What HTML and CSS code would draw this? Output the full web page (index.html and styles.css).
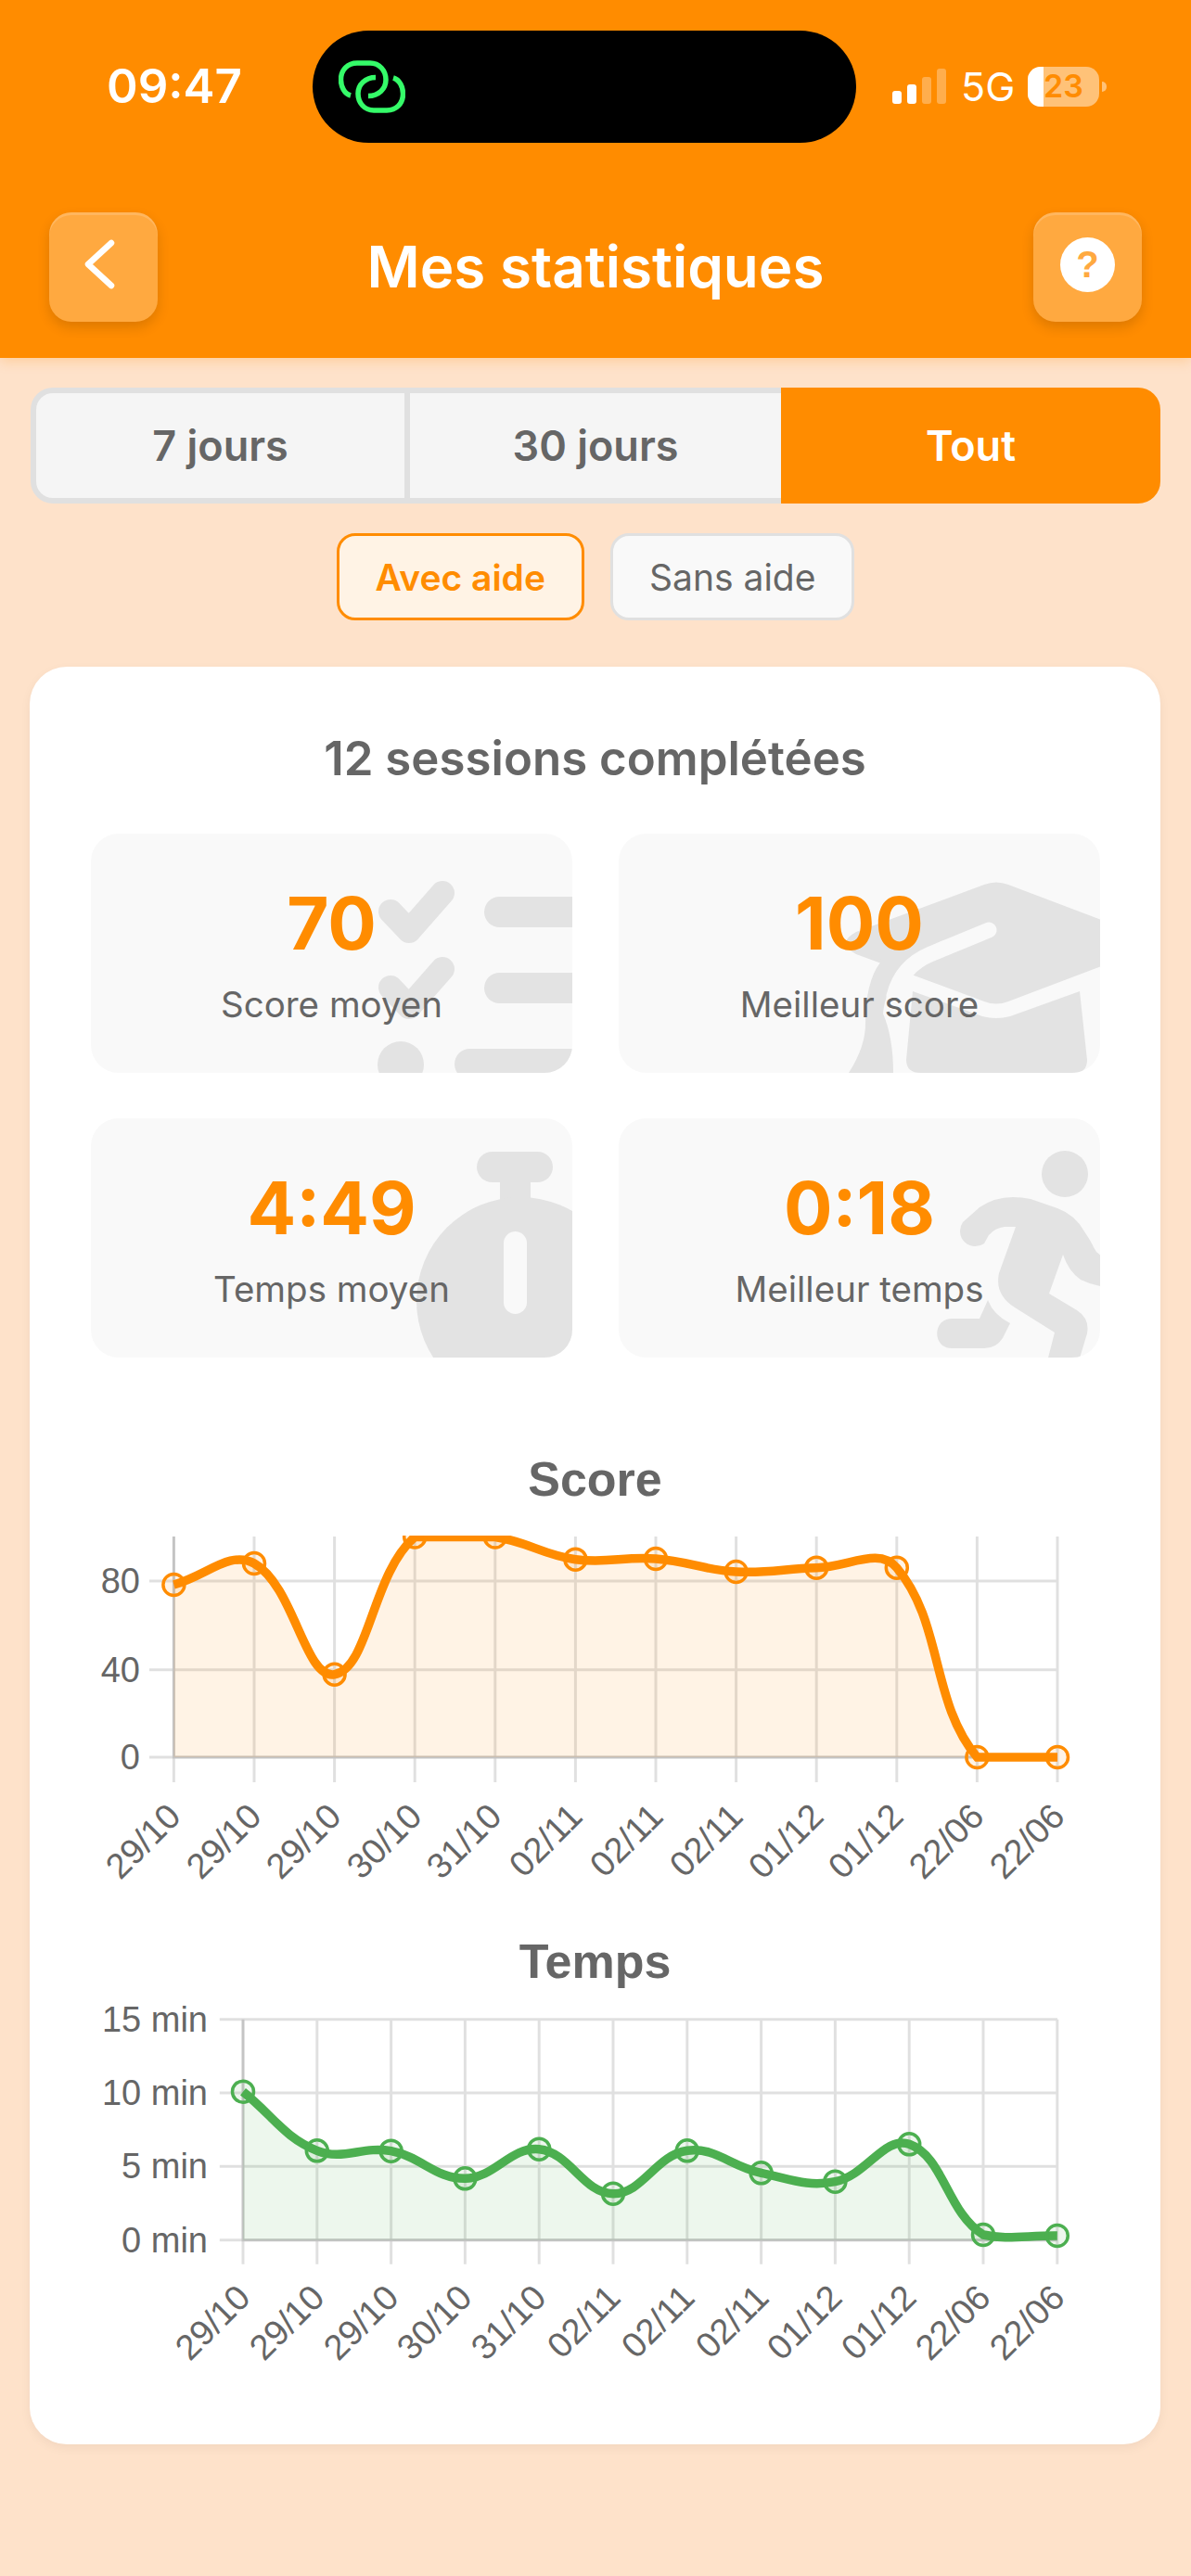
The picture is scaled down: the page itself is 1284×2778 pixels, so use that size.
FILE: index.html
```html
<!DOCTYPE html>
<html lang="fr">
<head>
<meta charset="utf-8">
<title>Mes statistiques</title>
<link rel="stylesheet" href="styles.css">
</head>
<body>
<header class="header">
  <div class="status">
    <span class="time">09:47</span>
    <div class="island">
      <svg class="chain" viewBox="0 0 72 57" width="72" height="57"><path d="M13 38C6 36 2.5 28 2.5 21C2.5 10 10 3 20 3H34C44 3 51 11 51 21C51 31 43 38.5 32 38.5"/><path d="M59 19C66 21 69.5 29 69.5 36C69.5 47 62 54 52 54H38C28 54 21 46 21 36C21 26 29 18.5 40 18.5"/></svg>
    </div>
    <div class="signal">
      <i class="bar b1"></i><i class="bar b2"></i><i class="bar b3 dim"></i><i class="bar b4 dim"></i>
    </div>
    <span class="net">5G</span>
    <div class="battery"><i class="battery-fill"></i><span class="battery-text">23</span></div>
    <i class="battery-tip"></i>
  </div>
  <nav class="nav">
    <button class="nav-btn"><svg class="chevron" viewBox="0 0 40 56" width="40" height="56"><polyline points="32,5 7,28 32,51"/></svg></button>
    <h1 class="nav-title">Mes statistiques</h1>
    <button class="nav-btn"><span class="help-dot">?</span></button>
  </nav>
</header>

<div class="tabs">
  <div class="tab tab-first">7 jours</div>
  <div class="tab tab-mid">30 jours</div>
  <div class="tab tab-on">Tout</div>
</div>

<div class="pills">
  <div class="pill pill-on">Avec aide</div>
  <div class="pill">Sans aide</div>
</div>

<main class="card">
  <h2 class="card-title">12 sessions complétées</h2>
  <section class="stats">
    <div class="stat">
      <svg class="stat-icon" viewBox="0 0 519 258">
        <path class="ic-check" d="M323 84L343 105L379 64M323 166L343 187L379 146"/>
        <rect class="ic" x="424" y="68" width="130" height="33" rx="16.5"/>
        <rect class="ic" x="424" y="150" width="130" height="33" rx="16.5"/>
        <rect class="ic" x="392" y="232" width="160" height="33" rx="16.5"/>
        <circle class="ic" cx="334" cy="249" r="25"/>
      </svg>
      <div class="stat-value">70</div>
      <div class="stat-label">Score moyen</div>
    </div>
    <div class="stat">
      <svg class="stat-icon" viewBox="0 0 519 258">
        <path class="ic" d="M394 55Q407 50 420 55L560 108Q585 118 560 128L420 181Q407 186 394 181L256 130Q234 118 256 106Z"/>
        <path class="ic" d="M264 126L282 135L300 140L304 150Q287 170 285 194Q296 220 296 258H248Q266 230 266 205Q266 160 282 139Z"/>
        <path class="band" d="M399 104L336 130Q305 143 297 175"/>
        <path class="ic" d="M317 170L392 197Q407 201 422 197L497 170L505 244Q505 258 491 258H326Q310 258 310 244Z"/>
      </svg>
      <div class="stat-value">100</div>
      <div class="stat-label">Meilleur score</div>
    </div>
    <div class="stat">
      <svg class="stat-icon" viewBox="0 0 519 258">
        <rect class="ic" x="416" y="36" width="82" height="33" rx="16.5"/>
        <rect class="ic" x="441" y="60" width="33" height="40"/>
        <circle class="ic" cx="463" cy="197" r="112"/>
        <rect class="hole" x="445" y="122" width="25" height="89" rx="12.5"/>
      </svg>
      <div class="stat-value">4:49</div>
      <div class="stat-label">Temps moyen</div>
    </div>
    <div class="stat">
      <svg class="stat-icon" viewBox="0 0 519 258">
        <circle class="ic" cx="481" cy="60" r="25"/>
        <path class="ic" d="M371 112L389 96Q405 85 425 85Q435 85 444 87L473 97Q492 104 502 122Q510 134 512 139Q516 148 525 150V182Q510 180 498 174Q485 165 479 147L464 189L494 207Q508 216 505 232L496 262H462L470 231L427 204Q405 190 410 167L428 117H416Q406 118 399 126L394 135A16.5 16.5 0 0 1 371 112Z"/>
        <path class="ic" d="M398 196L389 216H359C338 216 338 248 359 248H394Q407 248 414 237L422 221Q404 212 398 196Z"/>
      </svg>
      <div class="stat-value">0:18</div>
      <div class="stat-label">Meilleur temps</div>
    </div>
  </section>

  <h3 class="chart-title chart-title-score">Score</h3>
  <svg class="chart chart-score" viewBox="32 1625 1219 440">
    <defs><clipPath id="clip-score"><rect x="32" y="1656" width="1219" height="300"/></clipPath></defs>
    <path class="grid" d="M187.4 1657V1922M274 1657V1922M360.6 1657V1922M447.2 1657V1922M533.8 1657V1922M620.4 1657V1922M707 1657V1922M793.6 1657V1922M880.2 1657V1922M966.8 1657V1922M1053.4 1657V1922M1140 1657V1922M161 1705H1140M161 1800.7H1140M161 1895H1140"/>
    <path class="grid" d="M187.4 1657V1895H1140"/>
    <g clip-path="url(#clip-score)">
      <path class="area-orange" d="M187.4 1709C222 1699.8 247.8 1671.4 274 1686C317.1 1710.1 328.6 1811 360.6 1805.7C397.8 1799.6 401.1 1696.9 447.2 1657.5C470.4 1657.5 499.8 1657.5 533.8 1657.5C569.1 1662.4 585.1 1676.9 620.4 1681.7C654.3 1686.3 672.5 1678.4 707 1681C741.8 1683.7 758.8 1693.1 793.6 1695C828.1 1696.9 845.6 1691.6 880.2 1690.7C914.8 1689.8 947.4 1667.8 966.8 1690.7C1016.7 1749.5 1003.5 1836.2 1053.4 1895C1072.8 1895 1105.4 1895 1140 1895L1140 1895L187.4 1895Z"/>
      <path class="line-orange" d="M187.4 1709C222 1699.8 247.8 1671.4 274 1686C317.1 1710.1 328.6 1811 360.6 1805.7C397.8 1799.6 401.1 1696.9 447.2 1657.5C470.4 1657.5 499.8 1657.5 533.8 1657.5C569.1 1662.4 585.1 1676.9 620.4 1681.7C654.3 1686.3 672.5 1678.4 707 1681C741.8 1683.7 758.8 1693.1 793.6 1695C828.1 1696.9 845.6 1691.6 880.2 1690.7C914.8 1689.8 947.4 1667.8 966.8 1690.7C1016.7 1749.5 1003.5 1836.2 1053.4 1895C1072.8 1895 1105.4 1895 1140 1895"/>
      <g class="pts-orange">
        <circle cx="187.4" cy="1709" r="11.5"/><circle cx="274" cy="1686" r="11.5"/><circle cx="360.6" cy="1805.7" r="11.5"/><circle cx="447.2" cy="1657.5" r="11.5"/><circle cx="533.8" cy="1657.5" r="11.5"/><circle cx="620.4" cy="1681.7" r="11.5"/><circle cx="707" cy="1681" r="11.5"/><circle cx="793.6" cy="1695" r="11.5"/><circle cx="880.2" cy="1690.7" r="11.5"/><circle cx="966.8" cy="1690.7" r="11.5"/><circle cx="1053.4" cy="1895" r="11.5"/><circle cx="1140" cy="1895" r="11.5"/>
      </g>
    </g>
    <g class="tick-y">
      <text x="151" y="1718">80</text><text x="151" y="1813.7">40</text><text x="151" y="1908">0</text>
    </g>
    <g class="tick-x">
      <text transform="translate(197 1961) rotate(-45)">29/10</text>
      <text transform="translate(284 1961) rotate(-45)">29/10</text>
      <text transform="translate(370 1961) rotate(-45)">29/10</text>
      <text transform="translate(457 1961) rotate(-45)">30/10</text>
      <text transform="translate(543 1961) rotate(-45)">31/10</text>
      <text transform="translate(630 1961) rotate(-45)">02/11</text>
      <text transform="translate(717 1961) rotate(-45)">02/11</text>
      <text transform="translate(803 1961) rotate(-45)">02/11</text>
      <text transform="translate(890 1961) rotate(-45)">01/12</text>
      <text transform="translate(976 1961) rotate(-45)">01/12</text>
      <text transform="translate(1063 1961) rotate(-45)">22/06</text>
      <text transform="translate(1150 1961) rotate(-45)">22/06</text>
    </g>
  </svg>

  <h3 class="chart-title chart-title-time">Temps</h3>
  <svg class="chart chart-time" viewBox="32 2145 1219 490">
    <path class="grid" d="M262 2177.7V2441.7M341.8 2177.7V2441.7M421.6 2177.7V2441.7M501.4 2177.7V2441.7M581.2 2177.7V2441.7M661 2177.7V2441.7M740.8 2177.7V2441.7M820.6 2177.7V2441.7M900.4 2177.7V2441.7M980.2 2177.7V2441.7M1060 2177.7V2441.7M1139.8 2177.7V2441.7M236.8 2177.7H1140M236.8 2257H1140M236.8 2336.3H1140M236.8 2415.7H1140"/>
    <path class="grid" d="M262 2177.7V2415.7H1140"/>
    <path class="area-green" d="M262 2255.7C293.9 2281.1 306 2304.8 341.8 2319.3C369.8 2330.6 390.7 2313.9 421.6 2319.7C454.5 2325.9 469.6 2349.7 501.4 2349.3C533.4 2348.9 550.6 2314.6 581.2 2317.7C614.4 2321.1 628.9 2365.4 661 2365.7C692.8 2366 707.2 2324 740.8 2319.3C771.1 2315.1 788.1 2336.5 820.6 2343.3C852 2349.9 870.2 2358.6 900.4 2352.7C934 2346.2 953.7 2302.8 980.2 2312.3C1017.5 2325.7 1020.9 2385.8 1060 2410C1084.7 2415.7 1107.9 2410.6 1139.8 2411L1139.8 2415.7L262 2415.7Z"/>
    <path class="line-green" d="M262 2255.7C293.9 2281.1 306 2304.8 341.8 2319.3C369.8 2330.6 390.7 2313.9 421.6 2319.7C454.5 2325.9 469.6 2349.7 501.4 2349.3C533.4 2348.9 550.6 2314.6 581.2 2317.7C614.4 2321.1 628.9 2365.4 661 2365.7C692.8 2366 707.2 2324 740.8 2319.3C771.1 2315.1 788.1 2336.5 820.6 2343.3C852 2349.9 870.2 2358.6 900.4 2352.7C934 2346.2 953.7 2302.8 980.2 2312.3C1017.5 2325.7 1020.9 2385.8 1060 2410C1084.7 2415.7 1107.9 2410.6 1139.8 2411"/>
    <g class="pts-green">
      <circle cx="262" cy="2255.7" r="11.5"/><circle cx="341.8" cy="2319.3" r="11.5"/><circle cx="421.6" cy="2319.7" r="11.5"/><circle cx="501.4" cy="2349.3" r="11.5"/><circle cx="581.2" cy="2317.7" r="11.5"/><circle cx="661" cy="2365.7" r="11.5"/><circle cx="740.8" cy="2319.3" r="11.5"/><circle cx="820.6" cy="2343.3" r="11.5"/><circle cx="900.4" cy="2352.7" r="11.5"/><circle cx="980.2" cy="2312.3" r="11.5"/><circle cx="1060" cy="2410" r="11.5"/><circle cx="1139.8" cy="2411" r="11.5"/>
    </g>
    <g class="tick-y">
      <text x="224" y="2191">15 min</text><text x="224" y="2270">10 min</text><text x="224" y="2349.3">5 min</text><text x="224" y="2428.7">0 min</text>
    </g>
    <g class="tick-x">
      <text transform="translate(272 2480) rotate(-45)">29/10</text>
      <text transform="translate(352 2480) rotate(-45)">29/10</text>
      <text transform="translate(432 2480) rotate(-45)">29/10</text>
      <text transform="translate(511 2480) rotate(-45)">30/10</text>
      <text transform="translate(591 2480) rotate(-45)">31/10</text>
      <text transform="translate(671 2480) rotate(-45)">02/11</text>
      <text transform="translate(751 2480) rotate(-45)">02/11</text>
      <text transform="translate(831 2480) rotate(-45)">02/11</text>
      <text transform="translate(910 2480) rotate(-45)">01/12</text>
      <text transform="translate(990 2480) rotate(-45)">01/12</text>
      <text transform="translate(1070 2480) rotate(-45)">22/06</text>
      <text transform="translate(1150 2480) rotate(-45)">22/06</text>
    </g>
  </svg>
</main>
</body>
</html>
```
FILE: styles.css
```css
* { box-sizing: border-box; }
html, body { margin: 0; padding: 0; }
body {
  width: 1284px;
  height: 2778px;
  overflow: hidden;
  background: #fee2ca;
  font-family: Inter, "Liberation Sans", sans-serif;
  color: #666;
}

/* Header */
.header {
  height: 386px;
  background: #ff8c00;
  padding-top: 33px;
  box-shadow: 0 4px 12px rgba(255, 140, 0, 0.22);
  position: relative;
}
.status { display: flex; align-items: center; height: 121px; color: #fff; }
.time {
  margin-left: 115px;
  width: 145px;
  font-size: 51px;
  font-weight: 600;
  line-height: 1;
  margin-top: -2px;
}
.island {
  width: 586px;
  height: 121px;
  margin-left: 77px;
  background: #000;
  border-radius: 61px;
  display: flex;
  align-items: flex-start;
  padding: 32px 0 0 28px;
}
.chain { fill: none; stroke: #35fb69; stroke-width: 5.5; }
.signal { display: flex; align-items: flex-end; gap: 6px; height: 38px; margin-left: 39px; margin-top: -1px; }
.bar { display: block; width: 10px; background: #fff; border-radius: 3px; }
.bar.dim { background: rgba(255, 255, 255, 0.3); }
.b1 { height: 14px; }
.b2 { height: 21px; }
.b3 { height: 29px; }
.b4 { height: 38px; }
.net { margin-left: 16px; width: 56px; font-size: 43px; font-weight: 400; line-height: 1; margin-top: 0; }
.battery {
  margin-left: 16px;
  margin-top: -1px;
  width: 77px;
  height: 43px;
  border-radius: 14px;
  background: rgba(255, 255, 255, 0.47);
  overflow: hidden;
  display: flex;
  align-items: center;
}
.battery-fill { display: block; width: 17px; height: 100%; background: #fff; }
.battery-text { font-size: 34px; font-weight: 600; color: #ff8c00; line-height: 1; }
.battery-tip {
  display: block;
  width: 5px;
  height: 11px;
  margin: -1px 0 0 3px;
  background: rgba(255, 255, 255, 0.47);
  border-radius: 0 6px 6px 0;
}
.nav {
  display: flex;
  align-items: center;
  justify-content: space-between;
  height: 118px;
  margin: 75px 53px 0;
}
.nav-btn {
  width: 117px;
  height: 118px;
  padding: 0;
  border: 0;
  border-radius: 24px;
  background: #ffa940;
  box-shadow: 0 6px 14px rgba(0, 0, 0, 0.14), inset 0 3px 0 rgba(255, 255, 255, 0.16);
  display: flex;
  align-items: center;
  justify-content: center;
}
.chevron { fill: none; stroke: #fff; stroke-width: 6.5; stroke-linecap: round; stroke-linejoin: round; margin: -6px 0 0 -8px; }
.help-dot {
  width: 59px;
  height: 59px;
  border-radius: 50%;
  background: #fff;
  color: #ffa940;
  font-size: 40px;
  font-weight: 800;
  line-height: 59px;
  text-align: center;
  margin-top: -6px;
}
.nav-title {
  margin: 0;
  font-size: 62px;
  font-weight: 600;
  line-height: 72px;
  color: #fff;
}

/* Tabs */
.tabs {
  display: grid;
  grid-template-columns: 409px 400px 409px;
  height: 125px;
  margin: 32px 33px 0;
}
.tab {
  display: flex;
  align-items: center;
  justify-content: center;
  background: #f5f5f5;
  border: 6px solid #e0e0e0;
  font-size: 45px;
  font-weight: 600;
  color: #666;
}
.tab-first { border-radius: 24px 0 0 24px; }
.tab-mid { border-left: 0; border-right: 0; }
.tab-on { background: #ff8c00; border-color: #ff8c00; color: #fff; border-radius: 0 24px 24px 0; }

.pills { display: flex; justify-content: center; gap: 28px; margin-top: 32px; }
.pill {
  height: 94px;
  padding: 0 39px;
  display: flex;
  align-items: center;
  border: 3px solid #e0e0e0;
  border-radius: 20px;
  background: #f9f9f9;
  font-size: 39px;
  font-weight: 400;
  color: #666;
}
.pill-on { border-color: #ff8c00; background: #fff3e5; color: #ff8c00; font-weight: 600; }

/* Card */
.card {
  width: 1219px;
  height: 1917px;
  margin: 50px 0 0 32px;
  padding-top: 66px;
  background: #fff;
  border-radius: 40px;
  box-shadow: 0 4px 12px rgba(0, 0, 0, 0.05);
}
.card-title {
  margin: 0 0 48px;
  font-size: 51px;
  font-weight: 600;
  line-height: 66px;
  text-align: center;
  color: #666;
}
.stats {
  display: grid;
  grid-template-columns: 519px 519px;
  grid-auto-rows: 258px;
  column-gap: 50px;
  row-gap: 49px;
  margin: 0 65px 0 66px;
}
.stat {
  position: relative;
  overflow: hidden;
  border-radius: 30px;
  background: #f9f9f9;
  text-align: center;
  padding-top: 52px;
}
.stat-icon { position: absolute; left: 0; top: 0; width: 519px; height: 258px; }
.ic { fill: #e3e3e3; }
.ic-check { fill: none; stroke: #e3e3e3; stroke-width: 26; stroke-linecap: round; stroke-linejoin: round; }
.band { fill: none; stroke: #f9f9f9; stroke-width: 17; stroke-linecap: round; }
.hole { fill: #f9f9f9; }
.stat-value {
  position: relative;
  font-size: 78px;
  font-weight: 700;
  line-height: 90px;
  color: #ff8c00;
}
.stat-label {
  position: relative;
  margin-top: 17px;
  font-size: 38.5px;
  line-height: 50px;
  color: #666;
}

/* Charts */
.chart-title {
  margin: 0;
  font-family: "Liberation Sans", Arial, sans-serif;
  font-size: 52px;
  font-weight: 700;
  line-height: 60px;
  text-align: center;
  color: #666;
}
.chart-title-score { margin-top: 101px; }
.chart-title-time { margin-top: 20px; }
.chart { display: block; width: 1219px; }
.chart-score { height: 440px; }
.chart-time { height: 490px; }
.grid { fill: none; stroke: rgba(0, 0, 0, 0.12); stroke-width: 3; }
.area-orange { fill: rgba(255, 140, 0, 0.1); }
.line-orange { fill: none; stroke: #ff8c00; stroke-width: 9.5; }
.pts-orange circle { fill: rgba(255, 140, 0, 0.1); stroke: #ff8c00; stroke-width: 3.5; }
.area-green { fill: rgba(76, 175, 80, 0.1); }
.line-green { fill: none; stroke: #4caf50; stroke-width: 9.5; }
.pts-green circle { fill: rgba(76, 175, 80, 0.1); stroke: #4caf50; stroke-width: 3.5; }
.tick-y text, .tick-x text {
  font-family: "Liberation Sans", Arial, sans-serif;
  font-size: 38px;
  fill: #666;
  text-anchor: end;
}
```
